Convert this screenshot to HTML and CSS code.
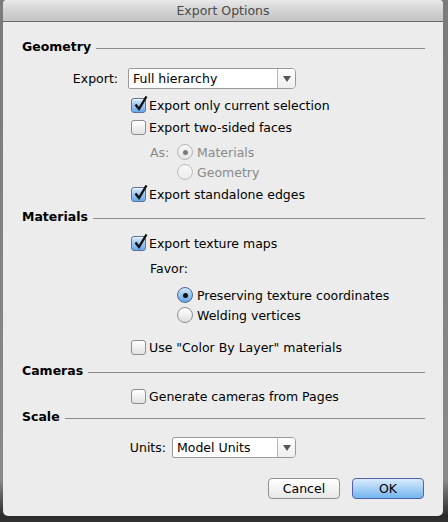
FILE: index.html
```html
<!DOCTYPE html>
<html>
<head>
<meta charset="utf-8">
<link rel="stylesheet" href="styles.css">
</head>
<body>
<div class="window">
  <div class="titlebar">Export Options</div>
  <div class="content">
    <div class="header mt14"><span class="htext">Geometry</span><span class="hline"></span></div>

    <div class="selrow mt12">
      <span class="slabel wide">Export:</span>
      <div class="select w168"><span class="seltext">Full hierarchy</span><span class="selarrow"><span class="tri"></span></span></div>
    </div>

    <div class="row chkrow mt6"><span class="chk on"><svg class="tick" viewBox="0 0 16 16"><path d="M3.5 8.5 L7 13 L14.5 0.5" fill="none" stroke="#111" stroke-width="2.4"/></svg></span><span>Export only current selection</span></div>
    <div class="row chkrow mt2"><span class="chk"></span><span>Export two-sided faces</span></div>
    <div class="row asrow mt5"><span class="aslabel dis">As:</span><span class="radio disdot"><span class="dot"></span></span><span class="dis">Materials</span></div>
    <div class="row radrow"><span class="radio dis"></span><span class="dis">Geometry</span></div>
    <div class="row chkrow mt2"><span class="chk on"><svg class="tick" viewBox="0 0 16 16"><path d="M3.5 8.5 L7 13 L14.5 0.5" fill="none" stroke="#111" stroke-width="2.4"/></svg></span><span>Export standalone edges</span></div>

    <div class="header mt2"><span class="htext">Materials</span><span class="hline"></span></div>
    <div class="row chkrow mt7"><span class="chk on"><svg class="tick" viewBox="0 0 16 16"><path d="M3.5 8.5 L7 13 L14.5 0.5" fill="none" stroke="#111" stroke-width="2.4"/></svg></span><span>Export texture maps</span></div>
    <div class="row favrow mt5"><span>Favor:</span></div>
    <div class="row radrow mt7"><span class="radio on"><span class="dot"></span></span><span>Preserving texture coordinates</span></div>
    <div class="row radrow"><span class="radio"></span><span>Welding vertices</span></div>
    <div class="row chkrow mt12"><span class="chk"></span><span>Use "Color By Layer" materials</span></div>

    <div class="header mt3"><span class="htext">Cameras</span><span class="hline"></span></div>
    <div class="row chkrow mt6"><span class="chk"></span><span>Generate cameras from Pages</span></div>

    <div class="header"><span class="htext">Scale</span><span class="hline"></span></div>
    <div class="selrow mt11">
      <span class="slabel narrow">Units:</span>
      <div class="select w124"><span class="seltext">Model Units</span><span class="selarrow"><span class="tri"></span></span></div>
    </div>

    <div class="buttons">
      <span class="btn cancel">Cancel</span>
      <span class="btn ok">OK</span>
    </div>
  </div>
</div>
</body>
</html>
```
FILE: styles.css
```css
html, body {
  margin: 0;
  padding: 0;
}
body {
  width: 448px;
  height: 522px;
  background: linear-gradient(to bottom, #7a7a7a 0, #8a8a8a 480px, #2a2a2a 516px, #333 522px);
  font-family: "DejaVu Sans", "Liberation Sans", sans-serif;
  font-size: 12.5px;
  color: #000;
  overflow: hidden;
}
.window {
  margin-left: 3px;
  width: 440px;
  height: 516px;
  background: #ececec;
  border-radius: 4px 4px 5px 5px;
  overflow: hidden;
  box-sizing: border-box;
}
.titlebar {
  height: 22px;
  box-sizing: border-box;
  border-bottom: 1px solid #6b6b6b;
  background: linear-gradient(to bottom, #e9e9e9, #d3d3d3 50%, #c4c4c4);
  text-align: center;
  line-height: 22px;
  color: #4a4a4a;
  font-size: 12.5px;
}
.content {
  padding: 0 18px 0 19px;
  display: flex;
  flex-direction: column;
}
.mt2 { margin-top: 2px; }
.mt3 { margin-top: 3px; }
.mt5 { margin-top: 5px; }
.mt6 { margin-top: 6px; }
.mt7 { margin-top: 7px; }
.mt11 { margin-top: 11px; }
.mt12 { margin-top: 12px; }
.mt14 { margin-top: 14px; }

.header {
  height: 20px;
  display: flex;
  align-items: center;
}
.htext {
  font-weight: bold;
  margin-right: 5px;
}
.hline {
  flex: 1;
  height: 1px;
  background: #8c8c8c;
  margin-top: 5px;
}
.row {
  height: 20px;
  display: flex;
  align-items: center;
}
.chkrow { padding-left: 109px; }
.asrow { padding-left: 128px; }
.radrow { padding-left: 155px; }
.favrow { padding-left: 128px; }
.aslabel { width: 27px; }
.dis { color: #8a8a8a; }

.chk {
  position: relative;
  width: 13px;
  height: 13px;
  border: 1px solid #8d8d8d;
  border-radius: 3px;
  background: linear-gradient(to bottom, #ffffff, #f1f1f1 50%, #e2e2e2);
  margin-right: 3px;
  flex: none;
  box-shadow: inset 0 1px 1px rgba(255,255,255,0.8);
}
.chk.on {
  border-color: #58709a;
  background: linear-gradient(to bottom, #d6e8fa, #9cc6f1 50%, #6aa9ea);
}
.tick {
  position: absolute;
  left: 0px;
  top: -3px;
  width: 16px;
  height: 16px;
}
.radio {
  width: 14px;
  height: 14px;
  border: 1px solid #8d8d8d;
  border-radius: 50%;
  background: linear-gradient(to bottom, #ffffff, #ececec 60%, #e0e0e0);
  margin-right: 4px;
  flex: none;
  display: flex;
  align-items: center;
  justify-content: center;
}
.radio.dis {
  border-color: #bdbdbd;
  background: linear-gradient(to bottom, #f8f8f8, #ececec);
}
.radio.disdot {
  border-color: #b5b5b5;
  background: linear-gradient(to bottom, #f6f6f6, #e6e6e6);
}
.radio.disdot .dot {
  background: #7a7a7a;
}
.radio.on {
  border-color: #4e6592;
  background: linear-gradient(to bottom, #d3e6fa, #94c1f0 55%, #6aa7e8);
}
.dot {
  width: 5px;
  height: 5px;
  border-radius: 50%;
  background: #111;
}

.selrow {
  height: 21px;
  display: flex;
  align-items: center;
}
.slabel {
  text-align: right;
  margin-right: 10px;
}
.slabel.wide { width: 96px; }
.slabel.narrow { width: 144px; margin-right: 6px; }
.select {
  height: 21px;
  box-sizing: border-box;
  border: 1px solid #9a9a9a;
  border-radius: 2px 4px 4px 2px;
  background: #fff;
  display: flex;
  align-items: stretch;
}
.w168 { width: 168px; }
.w124 { width: 124px; }
.seltext {
  flex: 1;
  padding-left: 4px;
  line-height: 19px;
}
.selarrow {
  width: 17px;
  border-left: 1px solid #b8b8b8;
  background: linear-gradient(to bottom, #ffffff, #eeeeee);
  border-radius: 0 3px 3px 0;
  display: flex;
  align-items: center;
  justify-content: center;
}
.tri {
  width: 0;
  height: 0;
  border-left: 4px solid transparent;
  border-right: 4px solid transparent;
  border-top: 6px solid #555;
}

.buttons {
  margin-top: 20px;
  display: flex;
  justify-content: flex-end;
  gap: 12px;
  padding-right: 1px;
}
.btn {
  width: 72px;
  height: 21px;
  box-sizing: border-box;
  border-radius: 4px;
  text-align: center;
  line-height: 19px;
}
.cancel {
  border: 1px solid #8f8f8f;
  background: linear-gradient(to bottom, #ffffff, #f4f4f4 50%, #e6e6e6);
}
.ok {
  border: 1px solid #5560a8;
  background: linear-gradient(to bottom, #d8ebfc, #a8d0f5 50%, #72b4ef);
}
```
